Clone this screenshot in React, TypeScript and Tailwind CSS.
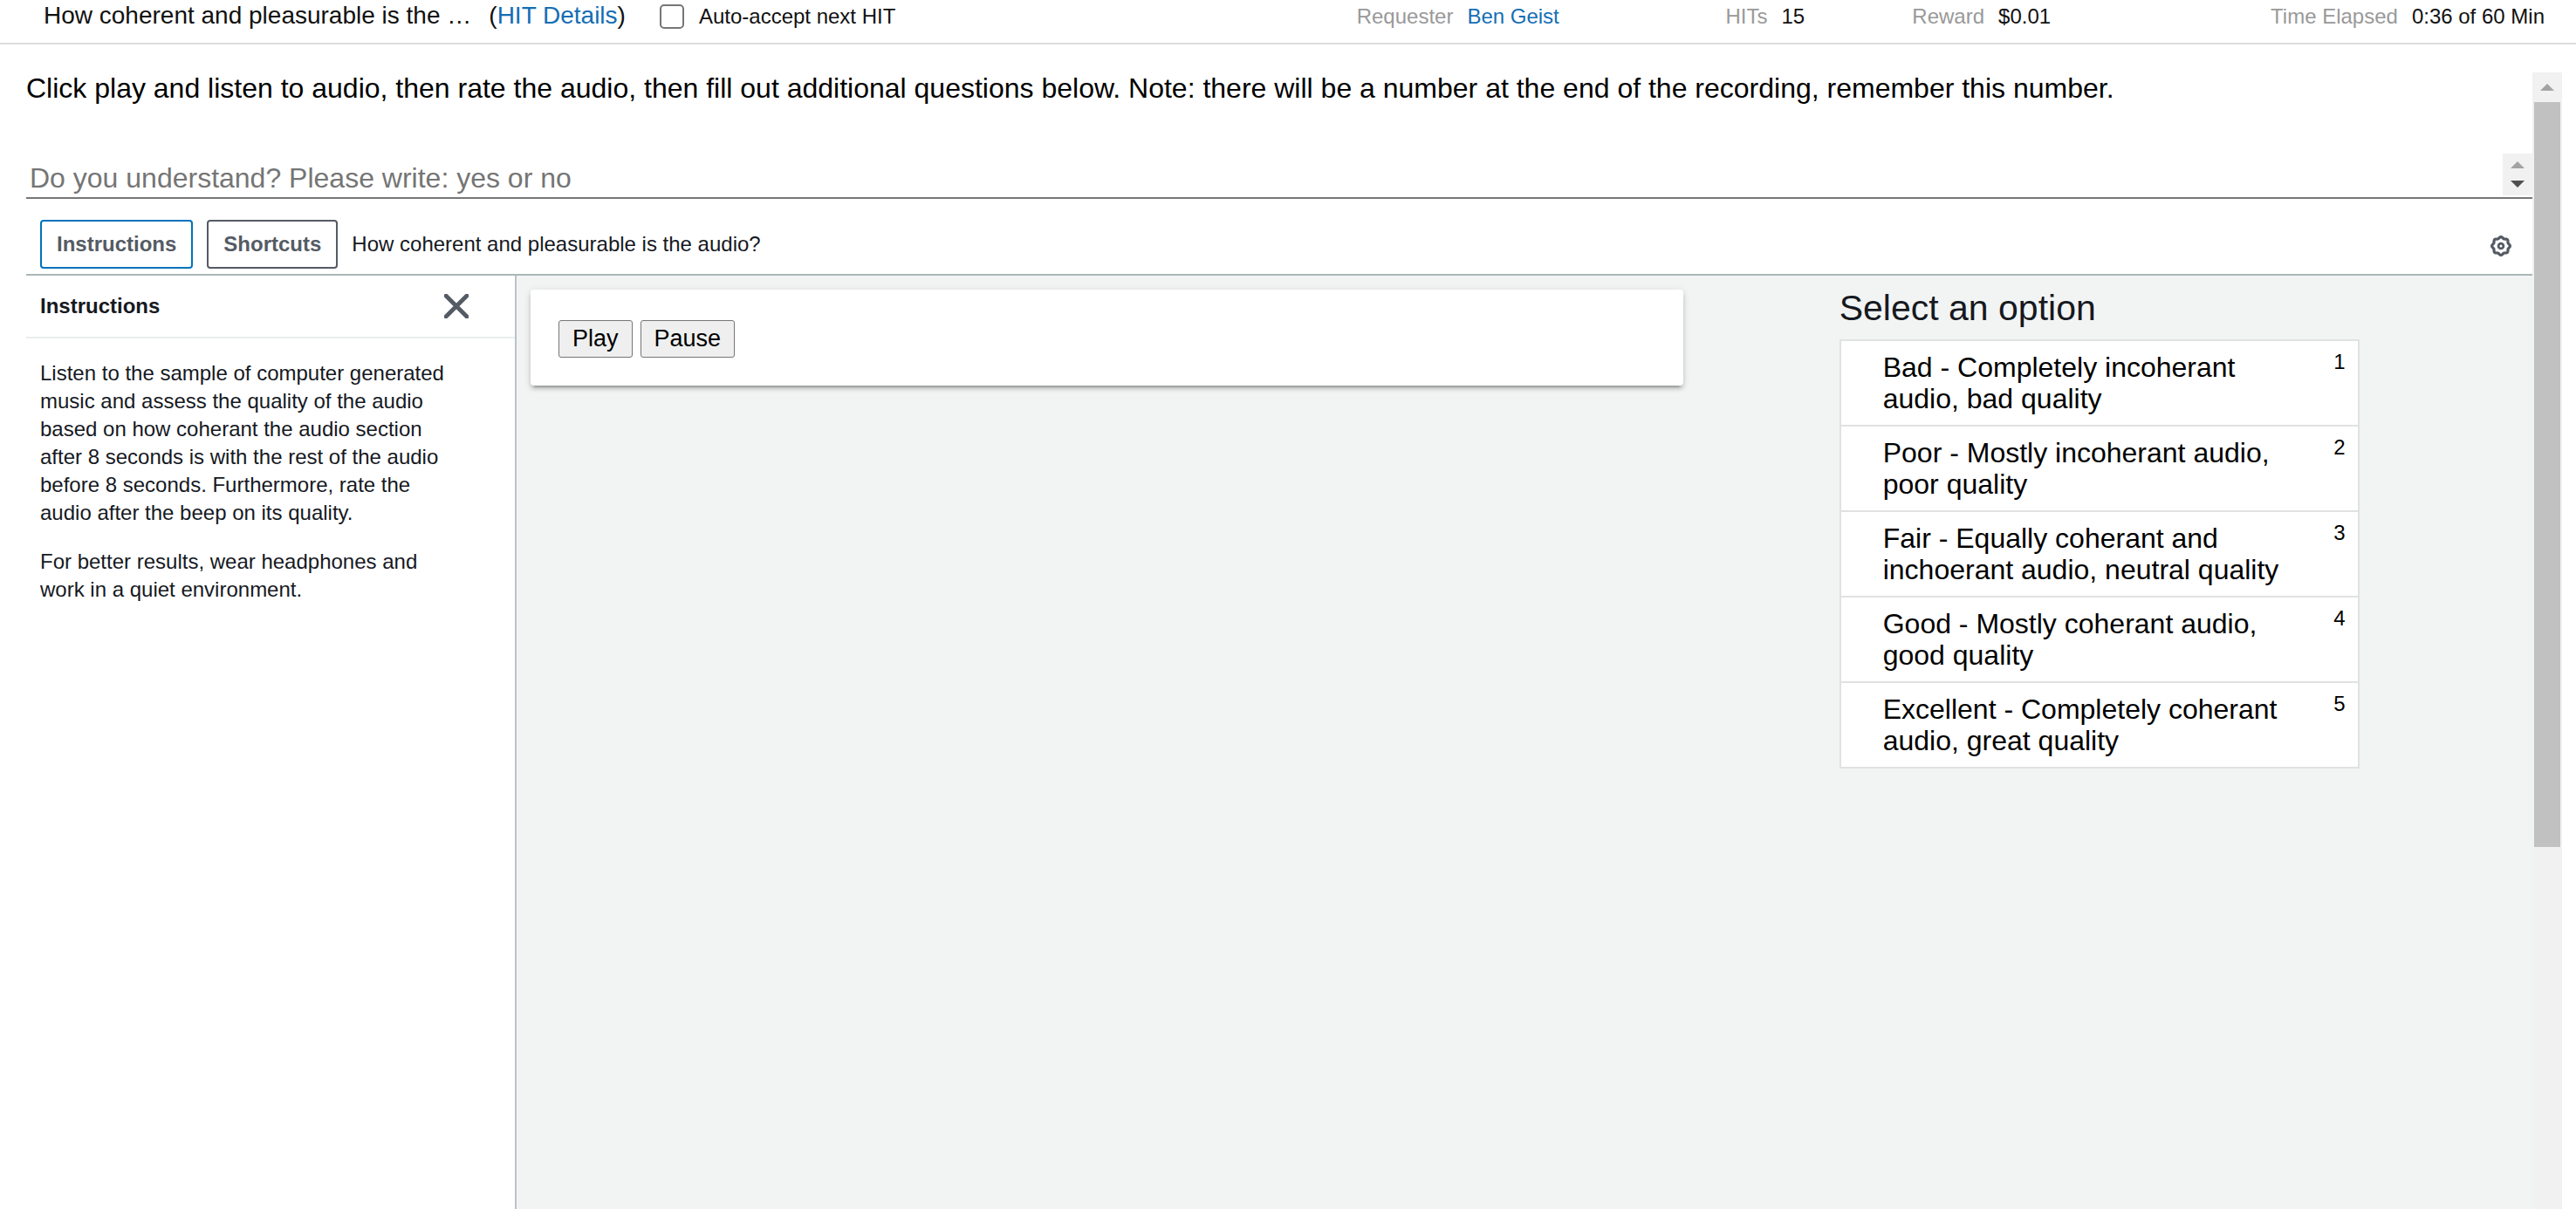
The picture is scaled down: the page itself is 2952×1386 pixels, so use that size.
import React from "react";

const options = [
  "Bad - Completely incoherant audio, bad quality",
  "Poor - Mostly incoherant audio, poor quality",
  "Fair - Equally coherant and inchoerant audio, neutral quality",
  "Good - Mostly coherant audio, good quality",
  "Excellent - Completely coherant audio, great quality",
];

function Triangle({ down = false }: { down?: boolean }) {
  return (
    <svg viewBox="0 0 16 8" className="h-2 w-4 fill-current" aria-hidden="true">
      <path d={down ? "M0 0h16L8 8z" : "M0 8h16L8 0z"} />
    </svg>
  );
}

function GearIcon() {
  const points = Array.from({ length: 65 }, (_, i) => {
    const a = (i / 64) * Math.PI * 2;
    const r = 9.6 + 0.8 * Math.cos(a * 8);
    return `${(12 + r * Math.cos(a)).toFixed(2)},${(12 + r * Math.sin(a)).toFixed(2)}`;
  });
  return (
    <svg viewBox="0 0 24 24" className="size-6" fill="none" stroke="#545b64" aria-hidden="true">
      <polygon points={points.join(" ")} strokeWidth="3.2" strokeLinejoin="round" />
      <circle cx="12" cy="12" r="2.9" strokeWidth="2.8" />
    </svg>
  );
}

function Fact({ label, children }: { label: string; children: React.ReactNode }) {
  return (
    <div className="flex gap-4 whitespace-nowrap last:justify-end">
      <span className="text-[#999]">{label}</span>
      <span>{children}</span>
    </div>
  );
}

function TopBar() {
  return (
    <header className="flex items-start border-b-2 border-[#ddd] pr-9 pb-[11px] pl-[50px] text-2xl/[38px] text-[#111]">
      <h1 className="text-[28px]/9 whitespace-nowrap">How coherent and pleasurable is the …</h1>
      <span className="ml-5 text-[28px]/9 whitespace-nowrap">
        (
        <a href="#details" className="text-[#146eb4]">
          HIT Details
        </a>
        )
      </span>
      <label className="ml-[39px] flex items-center gap-[17px] whitespace-nowrap">
        <input type="checkbox" className="size-7 appearance-none rounded-[5px] border-2 border-[#767676] bg-white" />
        Auto-accept next HIT
      </label>
      <div className="ml-auto grid w-[47.5%] grid-cols-[423fr_214fr_311fr_414fr]">
        <Fact label="Requester">
          <a href="#requester" className="text-[#146eb4]">
            Ben Geist
          </a>
        </Fact>
        <Fact label="HITs">15</Fact>
        <Fact label="Reward">$0.01</Fact>
        <Fact label="Time Elapsed">0:36 of 60 Min</Fact>
      </div>
    </header>
  );
}

function Question() {
  return (
    <div>
      <label htmlFor="understand" className="block text-[32px]/9">
        Click play and listen to audio, then rate the audio, then fill out additional questions below. Note: there will
        be a number at the end of the recording, remember this number.
      </label>
      <div className="mt-[57px] flex h-[52px] border-b-2 border-[#767676]">
        <textarea
          id="understand"
          rows={1}
          placeholder="Do you understand? Please write: yes or no"
          className="min-w-0 flex-1 resize-none overflow-hidden px-1 pt-[10px] text-[32px]/9 outline-none placeholder:text-[#757575]"
        />
        <div className="mb-[2px] flex w-[34px] flex-col items-center justify-center gap-[14px] bg-[#f1f1f1]">
          <span className="text-[#a3a3a3]">
            <Triangle />
          </span>
          <span className="text-[#505050]">
            <Triangle down />
          </span>
        </div>
      </div>
    </div>
  );
}

function Toolbar() {
  return (
    <div className="flex items-center gap-4 border-b-2 border-[#aab7b8] px-4 pt-6 pb-[6px] text-2xl text-[#16191f]">
      <button className="h-14 rounded-[4px] border-2 border-[#0073bb] px-[17px] font-bold text-[#545b64]">
        Instructions
      </button>
      <button className="h-14 rounded-[4px] border-2 border-[#545b64] px-[17px] font-bold text-[#545b64]">
        Shortcuts
      </button>
      <span>How coherent and pleasurable is the audio?</span>
      <button aria-label="Settings" className="mt-1 mr-2 ml-auto">
        <GearIcon />
      </button>
    </div>
  );
}

function InstructionsPanel() {
  return (
    <aside className="w-[562px] shrink-0 border-r-2 border-[#b9c3c4] bg-white text-2xl/8 text-[#16191f]">
      <div className="flex h-[72px] items-center justify-between border-b-2 border-[#eaeded] pr-[53px] pl-4">
        <h2 className="font-bold">Instructions</h2>
        <button aria-label="Close instructions">
          <svg viewBox="0 0 28 28" className="size-7" fill="none" stroke="#545b64" strokeWidth="4.8" aria-hidden="true">
            <path d="M2 2l24 24M26 2L2 26" strokeLinecap="round" />
          </svg>
        </button>
      </div>
      <div className="flex flex-col gap-6 pt-6 pr-16 pl-4">
        <p>
          Listen to the sample of computer generated music and assess the quality of the audio based on how coherant
          the audio section after 8 seconds is with the rest of the audio before 8 seconds. Furthermore, rate the audio
          after the beep on its quality.
        </p>
        <p>For better results, wear headphones and work in a quiet environment.</p>
      </div>
    </aside>
  );
}

function Player() {
  return (
    <section className="m-4 flex gap-[9px] self-start rounded-[4px] bg-white px-8 pt-[35px] pb-8 text-[27px] shadow-[0_4px_4px_rgba(0,0,0,0.14),0_2px_10px_rgba(0,0,0,0.12),0_6px_2px_-4px_rgba(0,0,0,0.2)]">
      <button className="h-[43px] rounded-[3px] border border-[#767676] bg-[#efefef] px-[15px] pb-[2px] leading-10">
        Play
      </button>
      <button className="h-[43px] rounded-[3px] border border-[#767676] bg-[#efefef] px-[15px] pb-[2px] leading-10">
        Pause
      </button>
    </section>
  );
}

function OptionList() {
  return (
    <section className="pt-3 pl-[17%]">
      <h2 className="mb-[11px] text-[41px]/[50px] text-[#16191f]">Select an option</h2>
      <div className="w-[596px] divide-y-2 divide-[#e0e2e2] border-2 border-[#e0e2e2] bg-white">
        {options.map((option, i) => (
          <button key={option} className="flex w-full items-start pl-12 text-left">
            <span className="flex-1 py-3 text-[32px]/9">{option}</span>
            <span className="w-[72px] py-[6px] pr-[14px] text-right text-2xl/9">{i + 1}</span>
          </button>
        ))}
      </div>
    </section>
  );
}

function ScrollBar() {
  return (
    <div className="flex w-[34px] shrink-0 flex-col bg-[#f1f1f1] text-[#a3a3a3]" aria-hidden="true">
      <div className="flex h-[34px] items-center justify-center">
        <Triangle />
      </div>
      <div className="flex-1 px-[2px]">
        <div className="h-[67.3%] bg-[#c1c1c1]" />
      </div>
    </div>
  );
}

export default function App() {
  return (
    <div className="flex h-screen flex-col overflow-hidden bg-white font-['Liberation_Sans',Arial,sans-serif] text-black">
      <TopBar />
      <div className="mt-8 mr-4 ml-[30px] flex min-h-0 flex-1">
        <div className="flex min-w-0 flex-1 flex-col">
          <Question />
          <Toolbar />
          <div className="flex flex-1">
            <InstructionsPanel />
            <main className="grid flex-1 grid-cols-[1353fr_957fr] bg-[#f2f4f4]">
              <Player />
              <OptionList />
            </main>
          </div>
        </div>
        <ScrollBar />
      </div>
    </div>
  );
}
